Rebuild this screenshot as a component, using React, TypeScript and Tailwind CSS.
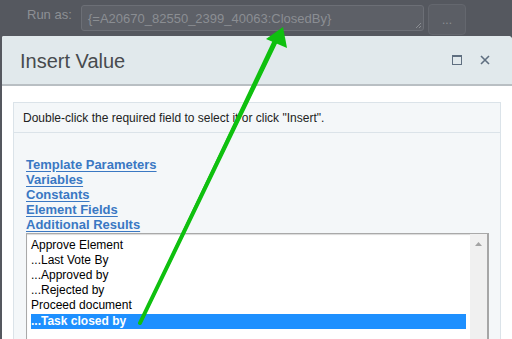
import React from 'react';

const items = ['Approve Element', '...Last Vote By', '...Approved by', '...Rejected by', 'Proceed document', '...Task closed by'];
const links = ['Template Parameters', 'Variables', 'Constants', 'Element Fields', 'Additional Results'];

const App: React.FC = () => {
  return (
    <div className="relative w-[512px] h-[339px] overflow-hidden bg-[#55585f] font-['Liberation_Sans',Arial,sans-serif]">
      {/* dimmed page behind the dialog */}
      <div className="h-[36px] flex items-start">
        <div className="w-[81px] pl-[27px] pt-[5px] text-[13px] text-[#8d9095]">Run as:</div>
        <div className="relative mt-[5px] w-[343px] h-[26px] rounded-[3px] border border-[#6c6f76] bg-[#5d6067] pl-[6px] pt-[5px] text-[13px] leading-[15px] text-[#8b8e93]">
          {'{=A20670_82550_2399_40063:ClosedBy}'}
          <svg className="absolute right-[1px] bottom-[1px]" width="8" height="8" viewBox="0 0 8 8">
            <path d="M7 2 L2 7 M7 5 L5 7" stroke="#8b8e93" strokeWidth="1" />
          </svg>
        </div>
        <div className="ml-[4px] mt-[4px] w-[38px] h-[31px] rounded-[4px] border border-[#64676e] bg-[#5b5e65] flex justify-center pt-[9px] text-[12px] leading-none text-[#8b8e93]">...</div>
      </div>

      {/* dialog */}
      <div className="ml-[2px] w-[510px] h-[303px] rounded-tr-[4px] rounded-tl-[2px] bg-white overflow-hidden">
        <div className="h-[50px] bg-[#e1e9ec] border-b-2 border-[#b9bfc3] flex items-center pl-[18px] pr-[22px]">
          <div className="flex-1 text-[20px] text-[#474b4e] pt-[1px]">Insert Value</div>
          <svg width="10" height="10" viewBox="0 0 10 10" className="mr-[18px]">
            <rect x="0.5" y="0.5" width="9" height="9" fill="none" stroke="#5f6f80" />
            <line x1="0" y1="1.5" x2="10" y2="1.5" stroke="#5f6f80" />
          </svg>
          <svg width="10" height="10" viewBox="0 0 10 10">
            <path d="M1 1 L9 9 M9 1 L1 9" stroke="#5f6f80" strokeWidth="1.6" />
          </svg>
        </div>

        <div className="pt-[16px] pl-[11px] pr-[11px]">
          <div className="border border-[#dbe3e9] bg-[#f4f7f9] h-[240px]">
            <div className="h-[30px] border-b border-[#dbe3e9] flex items-center pl-[9px] text-[12px] text-[#222]">
              Double-click the required field to select it or click "Insert".
            </div>
            <div className="pt-[24px] pl-[12px] pr-[11px]">
              {links.map((l) => (
                <div key={l} className="text-[13px] leading-[15px] font-bold text-[#3a78c3] underline underline-offset-[2px]">
                  {l}
                </div>
              ))}
              <div className="mt-[1px] h-[120px] flex border border-[#a9a9a9] border-r-2 border-r-[#a6a6a6] bg-white shadow-[inset_0_1px_1px_rgba(0,0,0,0.15)]">
                <div className="flex-1 pt-[4px] pl-[4px] pr-[4px]">
                  {items.map((it, i) => (
                    <div
                      key={it}
                      className={
                        i === 5
                          ? 'h-[15px] text-[12px] leading-[15px] bg-[#1e90ff] text-white font-bold mt-[1px]'
                          : 'h-[15px] text-[12px] leading-[15px] text-black'
                      }
                    >
                      {it}
                    </div>
                  ))}
                </div>
                <div className="w-[17px] bg-[#f0f0f0] flex justify-center pt-[8px]">
                  <svg width="7" height="4" viewBox="0 0 7 4">
                    <path d="M0 4 L3.5 0 L7 4 Z" fill="#a3a3a3" />
                  </svg>
                </div>
              </div>
            </div>
          </div>
        </div>
      </div>

      {/* green arrow annotation */}
      <svg className="absolute left-0 top-0 pointer-events-none" width="512" height="339" viewBox="0 0 512 339">
        <path d="M139 323 L141 324 L277 42 L273 40 Z" fill="#0fc00f" />
        <line x1="140" y1="323" x2="276" y2="41" stroke="#0fc00f" strokeWidth="4" strokeLinecap="round" />
        <polygon points="283,27 287,48 266,39" fill="#0fc00f" />
      </svg>
    </div>
  );
};

export default App;
